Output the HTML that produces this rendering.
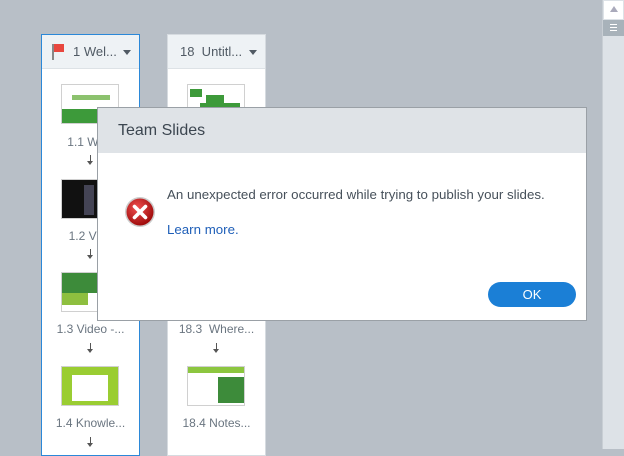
<!DOCTYPE html><html><head><style>
body{margin:0;width:624px;height:449px;background:#b8bfc7;position:relative;overflow:hidden;font-family:"Liberation Sans",sans-serif;}
.col{position:absolute;top:34px;width:97px;height:420px;background:#fff;border:1px solid #d6dbe0;}
.col.sel{border-color:#2b88d8;}
.hd{height:33px;background:#eef2f5;border-bottom:1px solid #dde2e6;font-size:13px;color:#505a64;line-height:33px;position:relative}
.tri{position:absolute;right:8px;top:15px;border:4px solid transparent;border-top:5px solid #505a64;}
.th{position:absolute;left:19px;width:56px;height:38px;border:1px solid #d0d0d0;background:#fff}
.lb{position:absolute;left:0;width:97px;text-align:center;font-size:12px;color:#6a7580}
.ar{position:absolute;left:48px;width:1px;height:8px;background:#555}
.ar:after{content:"";position:absolute;left:-3px;top:6px;border:3px solid transparent;border-top:4px solid #555}
</style></head><body>
<div class="col sel" style="left:41px">
 <div class="hd"><span style="position:absolute;left:10px;top:9px;width:2px;height:16px;background:#888"></span><span style="position:absolute;left:12px;top:9px;width:10px;height:8px;background:#e8473f"></span><span style="margin-left:31px">1 Wel...</span><div class="tri"></div></div>
 <div class="th" style="top:49px"><div style="position:absolute;bottom:0;left:0;right:0;height:14px;background:#3d9a3a"></div><div style="position:absolute;top:10px;left:10px;width:38px;height:5px;background:#8cc26e"></div></div>
 <div class="lb" style="top:100px">1.1 Welc</div><div class="ar" style="top:120px"></div>
 <div class="th" style="top:144px;background:#111"><div style="position:absolute;left:22px;top:5px;width:10px;height:30px;background:#445"></div></div>
 <div class="lb" style="top:194px">1.2 Vide</div><div class="ar" style="top:214px"></div>
 <div class="th" style="top:237px"><div style="position:absolute;top:0;left:0;right:0;height:20px;background:#3d8b3a"></div><div style="position:absolute;top:20px;left:0;width:26px;height:12px;background:#8ebf3f"></div></div>
 <div class="lb" style="top:287px">1.3 Video -...</div><div class="ar" style="top:308px"></div>
 <div class="th" style="top:331px;background:#9acd32"><div style="position:absolute;left:10px;top:8px;width:36px;height:26px;background:#fff"></div></div>
 <div class="lb" style="top:381px">1.4 Knowle...</div><div class="ar" style="top:402px"></div>
</div>
<div class="col" style="left:167px">
 <div class="hd"><span style="margin-left:12px">18&nbsp; Untitl...</span><div class="tri"></div></div>
 <div class="th" style="top:49px"><div style="position:absolute;left:2px;top:4px;width:12px;height:8px;background:#3d9a3a"></div><div style="position:absolute;left:18px;top:10px;width:18px;height:8px;background:#3d9a3a"></div><div style="position:absolute;left:12px;top:18px;width:40px;height:8px;background:#3d9a3a"></div></div>
 <div class="lb" style="top:287px">18.3&nbsp; Where...</div><div class="ar" style="top:308px"></div>
 <div class="th" style="top:331px"><div style="position:absolute;left:0;top:0;right:0;height:6px;background:#8cc63f"></div><div style="position:absolute;right:0;top:10px;width:26px;height:26px;background:#3d8b3a"></div></div>
 <div class="lb" style="top:381px">18.4 Notes...</div>
</div>
<div style="position:absolute;left:97px;top:107px;width:488px;height:212px;background:#fff;border:1px solid #9aa0a6">
 <div style="height:45px;background:#dfe3e7;font-size:16px;color:#3c4650;line-height:45px;padding-left:20px">Team Slides</div>
 <svg style="position:absolute;left:26px;top:88px" width="32" height="32" viewBox="0 0 32 32"><defs><radialGradient id="g" cx="40%" cy="35%" r="65%"><stop offset="0" stop-color="#f05050"/><stop offset="1" stop-color="#a00c0c"/></radialGradient></defs><circle cx="16" cy="16" r="15" fill="#ccc"/><circle cx="16" cy="16" r="13.5" fill="url(#g)"/><path d="M10.5 10.5L21.5 21.5M21.5 10.5L10.5 21.5" stroke="#fff" stroke-width="3.6" stroke-linecap="round"/></svg>
 <div style="position:absolute;left:69px;top:79px;font-size:13.3px;color:#46505a">An unexpected error occurred while trying to publish your slides.</div>
 <div style="position:absolute;left:69px;top:114px;font-size:13.3px;color:#1f5fb8">Learn more.</div>
 <div style="position:absolute;left:390px;top:174px;width:88px;height:25px;border-radius:13px;background:#1b7fd6;color:#fff;font-size:13px;text-align:center;line-height:25px">OK</div>
</div>
<div style="position:absolute;left:602px;top:0;width:22px;height:449px;background:#dde2e7;border-left:1px solid #c8ced4"></div>
<div style="position:absolute;left:604px;top:1px;width:19px;height:18px;background:#fff"><div style="position:absolute;left:6px;top:5px;border:4px solid transparent;border-bottom:6px solid #aab;border-top:0"></div></div>
<div style="position:absolute;left:603px;top:20px;width:21px;height:16px;background:#a8b2ba"><div style="position:absolute;left:7px;top:4px;width:7px;height:1px;background:#fff;box-shadow:0 3px #fff,0 6px #fff"></div></div>
</body></html>
